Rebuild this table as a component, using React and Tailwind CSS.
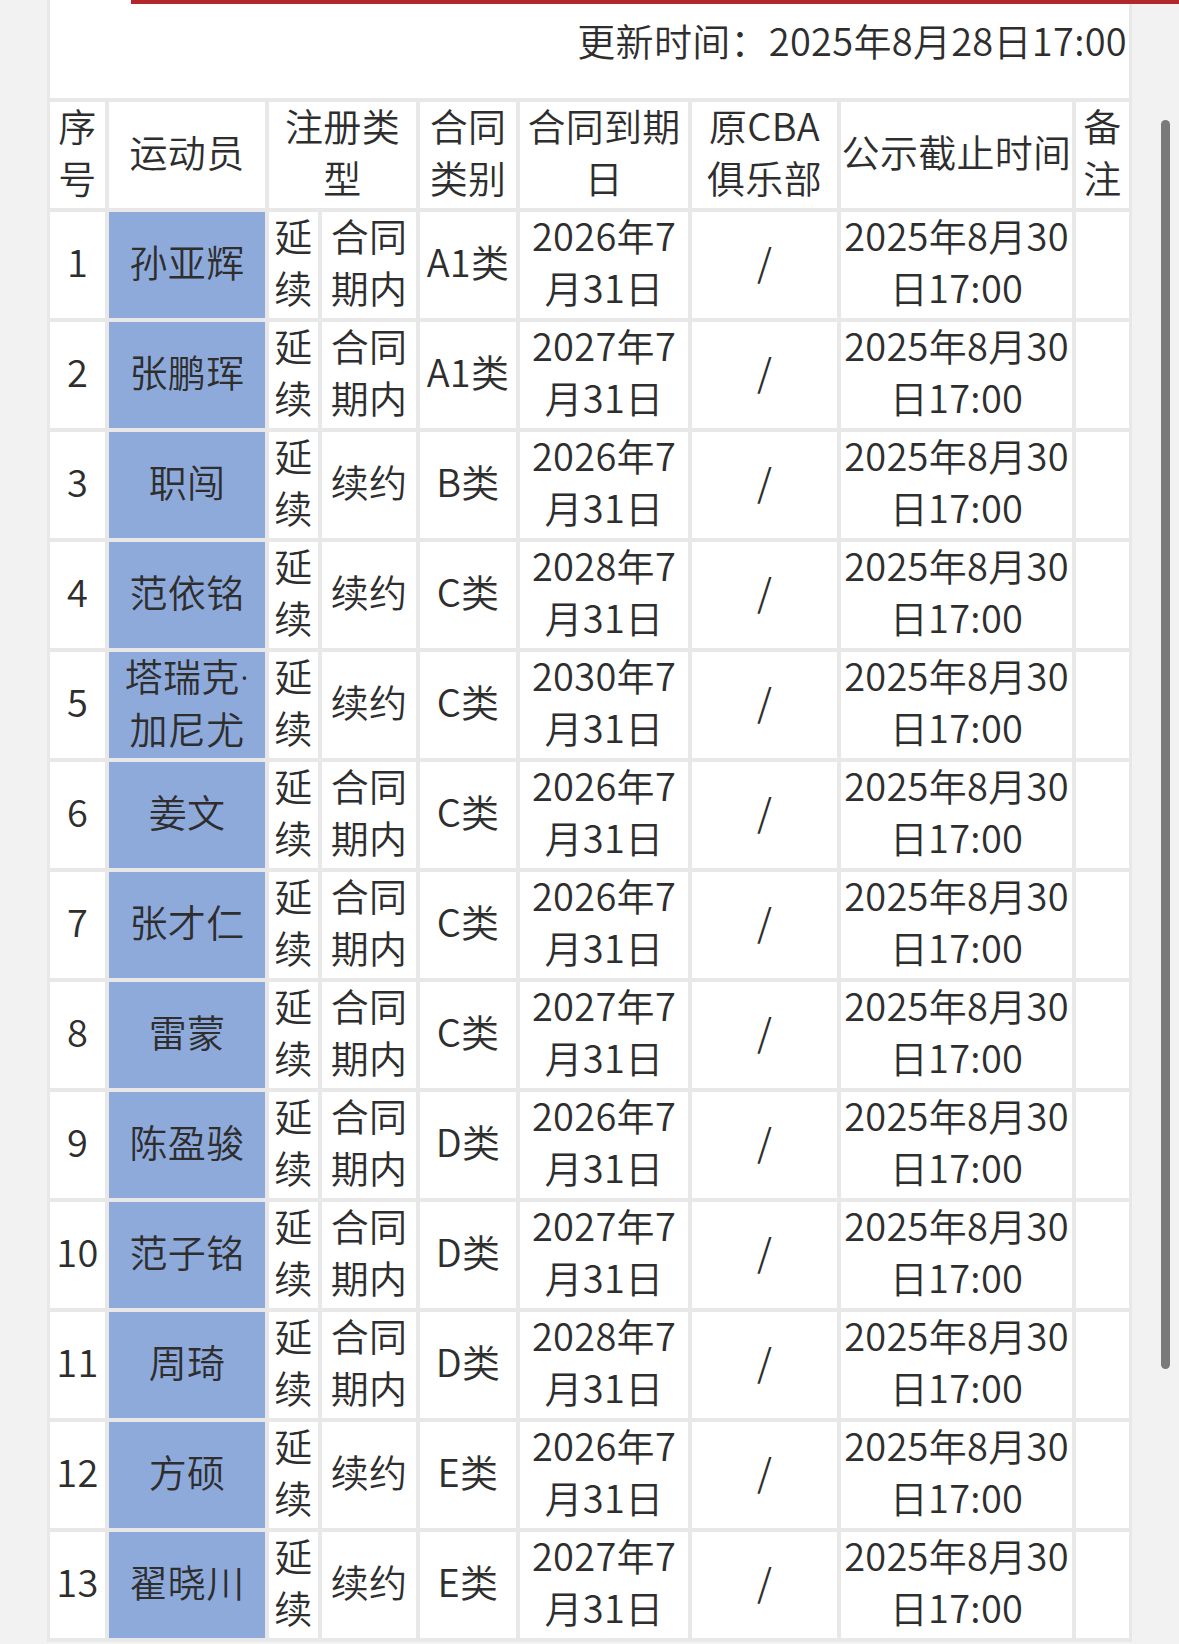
import React from 'react';

const players = [
    { no: 1, name: ['孙亚辉'], kind: ['合同', '期内'], cat: 'A1类', year: '2026' },
    { no: 2, name: ['张鹏珲'], kind: ['合同', '期内'], cat: 'A1类', year: '2027' },
    { no: 3, name: ['职闯'], kind: ['续约'], cat: 'B类', year: '2026' },
    { no: 4, name: ['范依铭'], kind: ['续约'], cat: 'C类', year: '2028' },
    {
        no: 5,
        name: [
            <>
                塔瑞克<span style={{ fontFamily: '"Noto Sans", sans-serif' }}>·</span>
            </>,
            '加尼尤',
        ],
        kind: ['续约'],
        cat: 'C类',
        year: '2030',
    },
    { no: 6, name: ['姜文'], kind: ['合同', '期内'], cat: 'C类', year: '2026' },
    { no: 7, name: ['张才仁'], kind: ['合同', '期内'], cat: 'C类', year: '2026' },
    { no: 8, name: ['雷蒙'], kind: ['合同', '期内'], cat: 'C类', year: '2027' },
    { no: 9, name: ['陈盈骏'], kind: ['合同', '期内'], cat: 'D类', year: '2026' },
    { no: 10, name: ['范子铭'], kind: ['合同', '期内'], cat: 'D类', year: '2027' },
    { no: 11, name: ['周琦'], kind: ['合同', '期内'], cat: 'D类', year: '2028' },
    { no: 12, name: ['方硕'], kind: ['续约'], cat: 'E类', year: '2026' },
    { no: 13, name: ['翟晓川'], kind: ['续约'], cat: 'E类', year: '2027' },
];

function Cell({ lines, bg = 'bg-white', className = '' }) {
    return (
        <div className={`h-[106px] ${bg} flex items-center justify-center pb-[8px] text-center whitespace-nowrap ${className}`}>
            <div>
                {lines.map((l, i) => (
                    <div key={i}>{l}</div>
                ))}
            </div>
        </div>
    );
}

export default function App() {
    return (
        <div
            className="w-[1179px] min-h-[1644px] bg-[#f2f2f2] text-[#2e2e2e] text-[38px] leading-[52px] font-[350] tracking-[0.3px] [text-spacing-trim:space-all]"
            style={{ fontFamily: '"Noto Sans CJK SC", "Noto Sans", sans-serif' }}
        >
            <div className="flex h-[4px]">
                <div className="w-[47px]" />
                <div className="w-[84px] bg-white border-l-[3px] border-[#e8e8e8]" />
                <div className="flex-1 bg-[#b1272c]" />
            </div>
            <div className="flex">
                <div className="w-[47px] shrink-0" />
                <div className="w-[1085px] shrink-0 bg-[#e8e8e8] px-[3px] pb-[4px] flex flex-col gap-[4px]">
                    <div className="h-[94px] bg-white flex justify-end pt-[10px] pr-[2px]">
                        <span>更新时间：2025年8月28日17:00</span>
                    </div>
                    <div className="grid grid-cols-[55px_156px_49px_94px_96px_168px_145px_231px_53px] gap-[4px]">
                        <Cell lines={['序', '号']} />
                        <Cell lines={['运动员']} />
                        <Cell lines={['注册类', '型']} className="col-span-2" />
                        <Cell lines={['合同', '类别']} />
                        <Cell lines={['合同到期', '日']} />
                        <Cell lines={['原CBA', '俱乐部']} />
                        <Cell lines={['公示截止时间']} />
                        <Cell lines={['备', '注']} />
                        {players.map((p) => (
                            <React.Fragment key={p.no}>
                                <Cell lines={[String(p.no)]} />
                                <Cell lines={p.name} bg="bg-[#8eaadb]" />
                                <Cell lines={['延', '续']} />
                                <Cell lines={p.kind} />
                                <Cell lines={[p.cat]} />
                                <Cell lines={[`${p.year}年7`, '月31日']} />
                                <Cell lines={['/']} />
                                <Cell lines={['2025年8月30', '日17:00']} />
                                <Cell lines={[]} />
                            </React.Fragment>
                        ))}
                    </div>
                </div>
                <div className="flex-1 pl-[29px] pt-[116px]">
                    <div className="w-[9px] h-[1249px] rounded-full bg-[#7a7a7a]" />
                </div>
            </div>
        </div>
    );
}
